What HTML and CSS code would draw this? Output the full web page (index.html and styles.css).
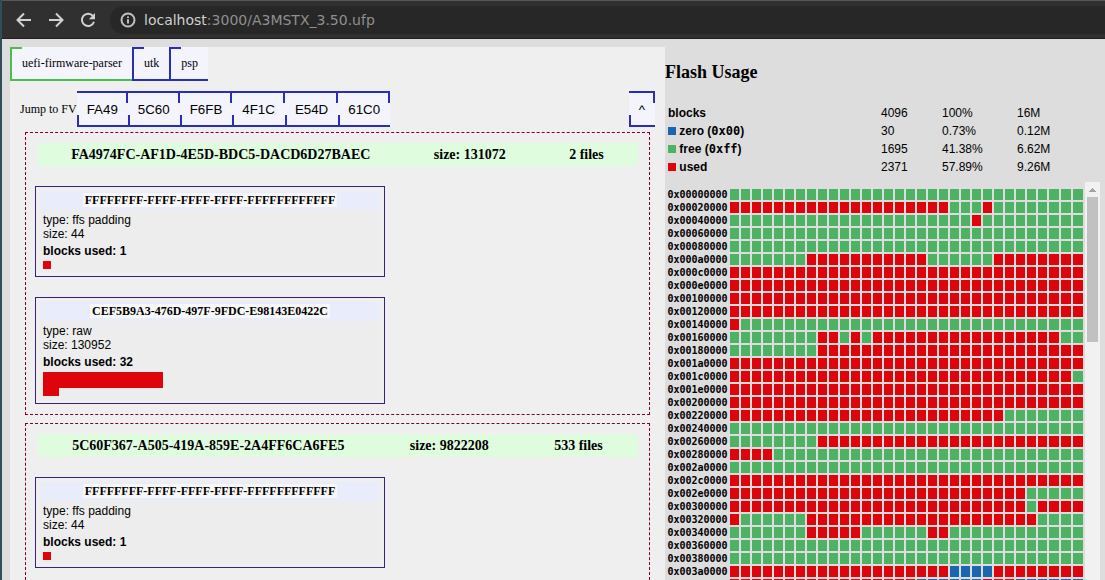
FILE: index.html
```html
<!DOCTYPE html>
<html lang="en">
<head>
<meta charset="utf-8">
<title>A3MSTX_3.50.ufp</title>
<link rel="stylesheet" href="styles.css">
</head>
<body>
<div class="window">
  <header class="browser-bar">
    <div class="nav-buttons">
      <button class="nav-button" aria-label="Back"><svg viewBox="0 0 16 16"><path d="M15 8H2M8 1.500L1.500 8L8 14.500"/></svg></button>
      <button class="nav-button" aria-label="Forward"><svg viewBox="0 0 16 16"><path d="M1 8H14M8 1.500L14.500 8L8 14.500"/></svg></button>
      <button class="nav-button" aria-label="Reload"><svg viewBox="0 0 16 16"><path d="M13 4A6.200 6.200 0 1 0 14 9.800"/><path class="solid" d="M15 1V7.200H8.800Z"/></svg></button>
    </div>
    <div class="address">
      <svg class="info-icon" viewBox="0 0 16 16"><circle cx="8" cy="8" r="6.500"/><path d="M8 7.200V11.500M8 4.500V6"/></svg>
      <span><span class="host">localhost</span>:3000/A3MSTX_3.50.ufp</span>
    </div>
  </header>
  <main class="page">
    <section class="report">
      <nav class="tabs">
        <button class="tab active">uefi-firmware-parser</button>
        <button class="tab">utk</button>
        <button class="tab">psp</button>
      </nav>
      <nav class="jump">
        <span>Jump to FV</span>
        <button class="key">FA49</button><button class="key">5C60</button><button class="key">F6FB</button><button class="key">4F1C</button><button class="key">E54D</button><button class="key">61C0</button>
        <button class="key to-top">^</button>
      </nav>
      <article class="volume">
        <header class="volume-head"><span>FA4974FC-AF1D-4E5D-BDC5-DACD6D27BAEC</span><span>size: 131072</span><span>2 files</span></header>
        <div class="card">
          <div class="card-body">
            <h4 class="card-head"><span class="guid">FFFFFFFF-FFFF-FFFF-FFFF-FFFFFFFFFFFF</span></h4>
            <div class="details">
              <div>type: ffs padding</div>
              <div>size: 44</div>
              <div class="used-label">blocks used: 1</div>
              <div class="used-blocks" data-count="1"></div>
            </div>
          </div>
        </div>
        <div class="card">
          <div class="card-body">
            <h4 class="card-head"><span class="guid">CEF5B9A3-476D-497F-9FDC-E98143E0422C</span></h4>
            <div class="details">
              <div>type: raw</div>
              <div>size: 130952</div>
              <div class="used-label">blocks used: 32</div>
              <div class="used-blocks" data-count="32"></div>
            </div>
          </div>
        </div>
      </article>
      <article class="volume continued">
        <header class="volume-head"><span>5C60F367-A505-419A-859E-2A4FF6CA6FE5</span><span>size: 9822208</span><span>533 files</span></header>
        <div class="card">
          <div class="card-body">
            <h4 class="card-head"><span class="guid">FFFFFFFF-FFFF-FFFF-FFFF-FFFFFFFFFFFF</span></h4>
            <div class="details">
              <div>type: ffs padding</div>
              <div>size: 44</div>
              <div class="used-label">blocks used: 1</div>
              <div class="used-blocks" data-count="1"></div>
            </div>
          </div>
        </div>
      </article>
    </section>
    <aside class="usage">
      <h2 class="usage-title">Flash Usage</h2>
      <table class="summary">
        <colgroup><col class="col-name"><col class="col-count"><col class="col-share"><col></colgroup>
        <tr><th scope="row">blocks</th><td>4096</td><td>100%</td><td>16M</td></tr>
        <tr><th scope="row"><i class="swatch zero"></i> zero (<code>0x00</code>)</th><td>30</td><td>0.73%</td><td>0.12M</td></tr>
        <tr><th scope="row"><i class="swatch free"></i> free (<code>0xff</code>)</th><td>1695</td><td>41.38%</td><td>6.62M</td></tr>
        <tr><th scope="row"><i class="swatch used"></i> used</th><td>2371</td><td>57.89%</td><td>9.26M</td></tr>
      </table>
      <div class="map-scroller">
        <div class="map-view">
          <table class="map">
            <colgroup><col class="col-address"><col class="col-block" span="29"><col span="3"></colgroup>
            <tbody id="map"></tbody>
          </table>
        </div>
        <div class="scrollbar"><svg class="scroll-arrow" viewBox="0 0 7 4"><path d="M3 0h1v1h1v1h1v1h1v1H0V3h1V2h1V1h1z"/></svg><div class="thumb"></div></div>
      </div>
    </aside>
  </main>
</div>
<script src="map.js"></script>
</body>
</html>
```
FILE: styles.css
```css
* { box-sizing: border-box; }

body {
  margin: 0;
  background: #ddd;
  color: #000;
  font: 12px/14px "Liberation Sans", Arial, sans-serif;
}

button {
  border: 0;
  border-radius: 0;
  font-family: "Liberation Sans", Arial, sans-serif;
  color: #000;
}

.window {
  display: flex;
  flex-direction: column;
  height: 100vh;
  overflow: hidden;
  border-left: 2px solid #2f4f58;
}

/* Browser toolbar */
.browser-bar {
  display: flex;
  flex: none;
  align-items: center;
  gap: 14px;
  height: 39px;
  padding-left: 14px;
  background: #303030;
  border-top: 1px solid #565858;
  border-bottom: 1px solid #231f20;
}

.nav-buttons {
  display: flex;
  gap: 16px;
}

.nav-button {
  width: 16px;
  height: 16px;
  padding: 0;
  background: none;
}

.nav-button svg,
.info-icon {
  display: block;
  width: 16px;
  height: 16px;
  fill: none;
  stroke: #d2d2d2;
  stroke-width: 2;
}

.nav-button .solid {
  fill: #d2d2d2;
  stroke: none;
}

.address {
  display: flex;
  flex: 1;
  align-items: center;
  gap: 8px;
  height: 28px;
  padding-left: 10px;
  border-radius: 14px 0 0 14px;
  background: #272727;
  color: #8f8f8f;
  font: 14px/20px "DejaVu Sans", sans-serif;
}

.address .info-icon {
  stroke: #c0c0c0;
}

.host { color: #d0d0d0; }

/* Page columns */
.page {
  display: flex;
  flex: 1;
  min-height: 0;
  padding: 8px 5px 0 8px;
}

.report {
  display: flex;
  flex: 655;
  flex-direction: column;
  background: #efefef;
}

.usage {
  display: flex;
  flex: 435;
  flex-direction: column;
}

/* Tabs */
.tabs { display: flex; }

.tab {
  height: 34px;
  padding: 0 10px;
  border-left: 2px solid #2c2cbb;
  border-bottom: 2px solid #2c2cbb;
  background: linear-gradient(#2c2cbb, #2c2cbb) 0 0 / 10px 2px no-repeat #f4f4fd;
  font: 12px/14px "Liberation Serif", serif;
}

.tab.active {
  border-color: #4bbf4b;
  background-image: linear-gradient(#4bbf4b, #4bbf4b);
}

/* Jump bar */
.jump {
  display: flex;
  align-items: center;
  padding: 10px 10px 5px;
  font: 12px/14px "Liberation Serif", serif;
}

.key {
  height: 36px;
  padding: 0 10px;
  border: solid #2c2cbb;
  border-width: 2px 0;
  background:
    linear-gradient(#2c2cbb, #2c2cbb) 100% 0 / 2px 10px no-repeat,
    linear-gradient(#2c2cbb, #2c2cbb) 0 100% / 2px 10px no-repeat,
    #f4f4fd;
}

.to-top { margin-left: auto; }

/* Firmware volumes */
.volume {
  margin: 0 15px 8px;
  padding: 10px 9px;
  border: 1px dashed #800028;
}

.volume.continued {
  flex: 1;
  margin-bottom: 0;
  border-bottom: 0;
}

.volume-head {
  display: flex;
  justify-content: space-around;
  max-width: 600px;
  margin: 0 auto 20px;
  padding: 4px 2px 3px;
  background: #dffcdf;
  font: bold 14px/16px "Liberation Serif", serif;
}

.card {
  max-width: 350px;
  padding: 4px;
  border: 1px solid #3c2080;
}

.card + .card { margin-top: 20px; }
.card-body { background: #ededed; }

.card-head {
  margin: 0;
  padding: 2px 0 3px;
  background: #e8ecfb;
  text-align: center;
  font: bold 12px/14px "Liberation Serif", serif;
}

.guid {
  display: inline-block;
  padding: 0 2px;
  background: #f7f7f7;
}

.details { padding: 3px; }

.used-label {
  margin: 3px 0;
  font-weight: bold;
}

.used-blocks {
  display: flex;
  flex-wrap: wrap;
  max-width: 120px;
}

.used-blocks span {
  width: 8px;
  height: 8px;
  background: #dd040b;
}

/* Flash usage */
.usage-title {
  margin: 15px 0 21px;
  font: bold 18px/20px "Liberation Serif", serif;
}

.summary {
  width: 100%;
  table-layout: fixed;
  border-spacing: 2px;
}

.summary th,
.summary td {
  padding: 1px;
  text-align: left;
}

.col-name { width: 211px; }
.col-count { width: 59px; }
.col-share { width: 73px; }

.summary code { font: bold 12px/14px "DejaVu Sans Mono", monospace; }

.swatch {
  display: inline-block;
  width: 8px;
  height: 8px;
}

.zero { background: #1a66b0; }
.free { background: #4eb265; }
.used { background: #dd040b; }

.map-scroller {
  display: flex;
  flex: 1;
  min-height: 0;
  margin-top: 5px;
}

.map-view {
  flex: 1;
  padding-top: 5px;
  overflow: hidden;
}

.map {
  width: 100%;
  table-layout: fixed;
  border-spacing: 2px;
}

.map th,
.map td {
  height: 11px;
  padding: 0;
}

.col-address { width: 61px; }
.col-block { width: 9px; }

.map th { font: bold 10px/11px "DejaVu Sans Mono", monospace; }

.scrollbar {
  width: 15px;
  padding: 6px 2px 0;
  background: #f1f1f1;
}

.scroll-arrow {
  display: block;
  width: 7px;
  height: 4px;
  margin: 0 auto 5px;
  fill: #a3a3a3;
}

.thumb {
  height: 145px;
  background: #c1c1c1;
}
```
FILE: map.js
```js
// Each row lists runs of blocks: f = free, u = used, z = zero.
const rows = [
  "32f", "20u3f1u8f", "22f1u9f", "32f", "32f", "7f11u6f8u", "32u", "32u",
  "32u", "32u", "1u31f", "8f2u1f1u1f17u2f", "8f24u", "32u", "31u1f", "32u",
  "32u", "25u7f", "32f", "8f24u", "4u28f", "32f", "32u", "27u5f",
  "27u1f4u", "1u6f21u4f", "7f5u6f2u12f", "32f", "32f", "20u4z8u", "17u6z3u6z"
];
const kinds = { f: "free", u: "used", z: "zero" };
const labelled = 30;

document.getElementById("map").innerHTML = rows.map((runs, i) => {
  const address = i < labelled ? "0x" + (i * 0x20000).toString(16).padStart(8, "0") : "";
  const cells = runs.replace(/(\d+)([fuz])/g, (_, n, k) =>
    `<td class="${kinds[k]}"></td>`.repeat(n));
  return `<tr><th scope="row">${address}</th>${cells}</tr>`;
}).join("");

document.querySelectorAll(".used-blocks").forEach((el) => {
  el.innerHTML = "<span></span>".repeat(el.dataset.count);
});
```
